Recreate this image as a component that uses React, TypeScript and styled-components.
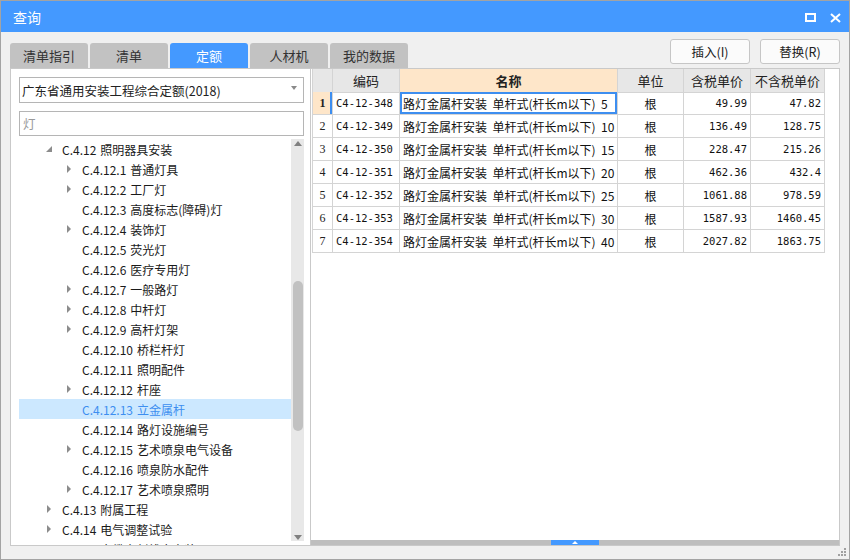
import React from "react";
import styled, { createGlobalStyle } from "styled-components";

const GlobalStyle = createGlobalStyle`
  html, body {
    margin: 0;
    padding: 0;
    background: #ffffff;
  }
  * {
    box-sizing: border-box;
  }
`;

const BLUE = "#4499ff";
const CJK = `"Noto Sans CJK SC", "Noto Sans", sans-serif`;
const MONO = `"DejaVu Sans Mono", "Liberation Mono", monospace`;

const Window = styled.div`
  position: relative;
  width: 850px;
  height: 560px;
  border: 1px solid #a3a3a3;
  background: #f0f0f0;
  display: flex;
  flex-direction: column;
  font-family: ${CJK};
  color: #222;
  overflow: hidden;
`;

const TitleBar = styled.div`
  height: 31px;
  flex: none;
  background: ${BLUE};
  display: flex;
  align-items: center;
  justify-content: space-between;
  padding: 0 8px 0 12px;

  .title {
    color: #fff;
    font-size: 14px;
  }
`;

const TitleButtons = styled.div`
  display: flex;
  align-items: center;
  gap: 14px;
  padding-top: 2px;

  svg {
    display: block;
  }
`;

const Body = styled.div`
  flex: 1;
  min-height: 0;
  display: flex;
  flex-direction: column;
  padding: 7px 9px 13px 9px;
`;

const Toolbar = styled.div`
  height: 29px;
  flex: none;
  display: flex;
  justify-content: space-between;
`;

const Tabs = styled.div`
  display: flex;
  align-items: flex-end;
  gap: 2px;
`;

const Tab = styled.div<{ $active?: boolean }>`
  width: 78px;
  height: 25px;
  border-radius: 3px 3px 0 0;
  background: ${(p) => (p.$active ? BLUE : "#c2c2c2")};
  color: ${(p) => (p.$active ? "#fff" : "#333")};
  font-size: 13px;
  display: flex;
  align-items: center;
  justify-content: center;
`;

const Actions = styled.div`
  display: flex;
  gap: 10px;
  align-items: flex-start;
`;

const Button = styled.button`
  width: 80px;
  height: 25px;
  border: 1px solid #c6c6c6;
  border-radius: 3px;
  background: #fbfbfb;
  font-family: ${CJK};
  font-size: 12.5px;
  color: #222;
  padding: 0;
`;

const Main = styled.div`
  flex: 1;
  display: flex;
  min-height: 0;
`;

const LeftPanel = styled.div`
  width: 301px;
  flex: none;
  border: 1px solid #c9c9c9;
  background: #fff;
  display: flex;
  flex-direction: column;
  padding: 8px 6px 0 8px;
  min-height: 0;
`;

const Select = styled.div`
  height: 26px;
  flex: none;
  border: 1px solid #b5b5b5;
  display: flex;
  align-items: center;
  justify-content: space-between;
  padding: 0 6px 0 2px;
  font-size: 12.5px;
  color: #222;
`;

const Caret = styled.span`
  width: 0;
  height: 0;
  border-left: 3.5px solid transparent;
  border-right: 3.5px solid transparent;
  border-top: 4px solid #8a8a8a;
  margin-top: -4px;
`;

const SearchInput = styled.div`
  height: 25px;
  flex: none;
  margin-top: 8px;
  border: 1px solid #b5b5b5;
  display: flex;
  align-items: center;
  padding-left: 3px;
  font-size: 12.5px;
  color: #9a9a9a;
`;

const Tree = styled.div`
  flex: 1;
  margin-top: 3px;
  display: flex;
  min-height: 0;
`;

const TreeList = styled.div`
  flex: 1;
  overflow: hidden;
`;

const TreeRow = styled.div<{ $level: number; $selected?: boolean }>`
  height: 20px;
  display: flex;
  align-items: center;
  padding-left: ${(p) => p.$level * 20 + 8}px;
  font-size: 12px;
  white-space: nowrap;
  background: ${(p) => (p.$selected ? "#cce8ff" : "transparent")};
  color: ${(p) => (p.$selected ? "#3d8ef0" : "#1a1a1a")};

  .name {
    margin-left: 4px;
  }
`;

const Toggle = styled.span`
  width: 15px;
  flex: none;
  display: flex;
  align-items: center;
`;

const Collapsed = styled.span`
  width: 0;
  height: 0;
  border-top: 4px solid transparent;
  border-bottom: 4px solid transparent;
  border-left: 4px solid #8c8c8c;
`;

const Expanded = styled.span`
  width: 0;
  height: 0;
  border-left: 6px solid transparent;
  border-bottom: 6px solid #8c8c8c;
  margin-left: -1px;
`;

const VScroll = styled.div`
  width: 13px;
  flex: none;
  margin-bottom: 4px;
  background: #e8e8e8;
  display: flex;
  flex-direction: column;
  align-items: center;
`;

const ArrowUp = styled.span`
  margin-top: 2px;
  width: 0;
  height: 0;
  border-left: 4.5px solid transparent;
  border-right: 4.5px solid transparent;
  border-bottom: 5px solid #808080;
`;

const ArrowDown = styled.span`
  margin-top: auto;
  margin-bottom: 1px;
  width: 0;
  height: 0;
  border-left: 4.5px solid transparent;
  border-right: 4.5px solid transparent;
  border-top: 5px solid #808080;
`;

const Thumb = styled.div<{ $offset: number; $size: number }>`
  margin-top: ${(p) => p.$offset}px;
  width: 10px;
  height: ${(p) => p.$size}px;
  border-radius: 5px;
  background: #c1c1c1;
`;

const RightPanel = styled.div`
  flex: 1;
  border: 1px solid #c9c9c9;
  border-left: none;
  background: #fff;
  display: flex;
  flex-direction: column;
  min-width: 0;
  min-height: 0;
`;

const GridArea = styled.div`
  flex: 1;
  padding-left: 1px;
  overflow: hidden;
`;

const Grid = styled.div`
  display: grid;
  grid-template-columns: 20px 67px 218px 66px 67px 74px;
  grid-auto-rows: 23px;
  width: 513px;
  border-left: 1px solid #d4d4d4;

  & > :nth-child(-n + 6) {
    height: 24px;
  }
`;

const HeadCell = styled.div<{ $accent?: boolean }>`
  background: ${(p) => (p.$accent ? "#fee6c9" : "#e7e7e7")};
  border-right: 1px solid #d4d4d4;
  border-bottom: 1px solid #d4d4d4;
  display: flex;
  align-items: center;
  justify-content: center;
  font-size: 13px;
  font-weight: ${(p) => (p.$accent ? 700 : 400)};
  color: #222;
`;

const RowHead = styled.div<{ $current?: boolean }>`
  background: ${(p) => (p.$current ? "#fee6c9" : "#fff")};
  border-right: 1px solid #d4d4d4;
  border-bottom: 1px solid #d4d4d4;
  box-shadow: ${(p) => (p.$current ? "inset -2px 0 0 #3d8ef0" : "none")};
  display: flex;
  align-items: center;
  justify-content: center;
  font-family: "Liberation Serif", serif;
  font-size: 12px;
  font-weight: ${(p) => (p.$current ? 700 : 400)};
  color: #222;
`;

const Cell = styled.div<{ $align?: "left" | "center" | "right"; $cjk?: boolean; $focus?: boolean }>`
  border-right: 1px solid #d4d4d4;
  border-bottom: 1px solid #d4d4d4;
  display: flex;
  align-items: center;
  justify-content: ${(p) =>
    p.$align === "right" ? "flex-end" : p.$align === "center" ? "center" : "flex-start"};
  padding: 0 3px;
  font-family: ${(p) => (p.$cjk ? CJK : MONO)};
  font-size: ${(p) => (p.$cjk ? "12px" : "10.5px")};
  white-space: pre;
  overflow: hidden;
  color: #111;
  box-shadow: ${(p) => (p.$focus ? "inset 0 0 0 2px #3d8ef0" : "none")};
`;

const HScroll = styled.div`
  height: 5px;
  flex: none;
  background: #bebebe;
  display: flex;
  justify-content: center;
`;

const Handle = styled.div`
  width: 48px;
  background: ${BLUE};
  display: flex;
  align-items: center;
  justify-content: center;

  span {
    width: 0;
    height: 0;
    border-left: 3px solid transparent;
    border-right: 3px solid transparent;
    border-bottom: 3px solid #fff;
  }
`;

const Grip = styled.svg`
  position: absolute;
  right: 2px;
  bottom: 2px;
`;

type Node = { code: string; name: string; level: number; state?: "open" | "closed"; selected?: boolean };

const tree: Node[] = [
  { code: "C.4.12", name: "照明器具安装", level: 1, state: "open" },
  { code: "C.4.12.1", name: "普通灯具", level: 2, state: "closed" },
  { code: "C.4.12.2", name: "工厂灯", level: 2, state: "closed" },
  { code: "C.4.12.3", name: "高度标志(障碍)灯", level: 2 },
  { code: "C.4.12.4", name: "装饰灯", level: 2, state: "closed" },
  { code: "C.4.12.5", name: "荧光灯", level: 2 },
  { code: "C.4.12.6", name: "医疗专用灯", level: 2 },
  { code: "C.4.12.7", name: "一般路灯", level: 2, state: "closed" },
  { code: "C.4.12.8", name: "中杆灯", level: 2, state: "closed" },
  { code: "C.4.12.9", name: "高杆灯架", level: 2, state: "closed" },
  { code: "C.4.12.10", name: "桥栏杆灯", level: 2 },
  { code: "C.4.12.11", name: "照明配件", level: 2 },
  { code: "C.4.12.12", name: "杆座", level: 2, state: "closed" },
  { code: "C.4.12.13", name: "立金属杆", level: 2, selected: true },
  { code: "C.4.12.14", name: "路灯设施编号", level: 2 },
  { code: "C.4.12.15", name: "艺术喷泉电气设备", level: 2, state: "closed" },
  { code: "C.4.12.16", name: "喷泉防水配件", level: 2 },
  { code: "C.4.12.17", name: "艺术喷泉照明", level: 2, state: "closed" },
  { code: "C.4.13", name: "附属工程", level: 1, state: "closed" },
  { code: "C.4.14", name: "电气调整试验", level: 1, state: "closed" },
  { code: "C.4.15", name: "电缆穿刺线夹安装", level: 1, state: "closed" },
];

const rows = [
  ["C4-12-348", "5", "49.99", "47.82"],
  ["C4-12-349", "10", "136.49", "128.75"],
  ["C4-12-350", "15", "228.47", "215.26"],
  ["C4-12-351", "20", "462.36", "432.4"],
  ["C4-12-352", "25", "1061.88", "978.59"],
  ["C4-12-353", "30", "1587.93", "1460.45"],
  ["C4-12-354", "40", "2027.82", "1863.75"],
];

const tabs = ["清单指引", "清单", "定额", "人材机", "我的数据"];

export default function App() {
  return (
    <>
      <GlobalStyle />
      <Window>
        <TitleBar>
          <span className="title">查询</span>
          <TitleButtons>
            <svg width="11" height="9" viewBox="0 0 11 9">
              <rect x="1" y="1" width="9" height="7" fill="none" stroke="#fff" strokeWidth="2" />
            </svg>
            <svg width="11" height="10" viewBox="0 0 11 10">
              <path d="M1 1 L10 9 M10 1 L1 9" stroke="#fff" strokeWidth="2" />
            </svg>
          </TitleButtons>
        </TitleBar>

        <Body>
          <Toolbar>
            <Tabs>
              {tabs.map((t) => (
                <Tab key={t} $active={t === "定额"}>
                  {t}
                </Tab>
              ))}
            </Tabs>
            <Actions>
              <Button>插入(I)</Button>
              <Button>替换(R)</Button>
            </Actions>
          </Toolbar>

          <Main>
            <LeftPanel>
              <Select>
                <span>广东省通用安装工程综合定额(2018)</span>
                <Caret />
              </Select>
              <SearchInput>灯</SearchInput>
              <Tree>
                <TreeList>
                  {tree.map((n) => (
                    <TreeRow key={n.code} $level={n.level} $selected={n.selected}>
                      <Toggle>
                        {n.state === "open" && <Expanded />}
                        {n.state === "closed" && <Collapsed />}
                      </Toggle>
                      <span>{n.code}</span>
                      <span className="name">{n.name}</span>
                    </TreeRow>
                  ))}
                </TreeList>
                <VScroll>
                  <ArrowUp />
                  <Thumb $offset={135} $size={150} />
                  <ArrowDown />
                </VScroll>
              </Tree>
            </LeftPanel>

            <RightPanel>
              <GridArea>
                <Grid>
                  <HeadCell />
                  <HeadCell>编码</HeadCell>
                  <HeadCell $accent>名称</HeadCell>
                  <HeadCell>单位</HeadCell>
                  <HeadCell>含税单价</HeadCell>
                  <HeadCell>不含税单价</HeadCell>
                  {rows.map((r, i) => (
                    <React.Fragment key={r[0]}>
                      <RowHead $current={i === 0}>{i + 1}</RowHead>
                      <Cell>{r[0]}</Cell>
                      <Cell $cjk $focus={i === 0}>
                        {`路灯金属杆安装  单杆式(杆长m以下)  ${r[1]}`}
                      </Cell>
                      <Cell $cjk $align="center">
                        根
                      </Cell>
                      <Cell $align="right">{r[2]}</Cell>
                      <Cell $align="right">{r[3]}</Cell>
                    </React.Fragment>
                  ))}
                </Grid>
              </GridArea>
              <HScroll>
                <Handle>
                  <span />
                </Handle>
              </HScroll>
            </RightPanel>
          </Main>
        </Body>

        <Grip width="9" height="9" viewBox="0 0 9 9">
          <rect x="6" y="0" width="2" height="2" fill="#a0a0a0" />
          <rect x="3" y="3" width="2" height="2" fill="#a0a0a0" />
          <rect x="6" y="3" width="2" height="2" fill="#a0a0a0" />
          <rect x="0" y="6" width="2" height="2" fill="#a0a0a0" />
          <rect x="3" y="6" width="2" height="2" fill="#a0a0a0" />
          <rect x="6" y="6" width="2" height="2" fill="#a0a0a0" />
        </Grip>
      </Window>
    </>
  );
}
